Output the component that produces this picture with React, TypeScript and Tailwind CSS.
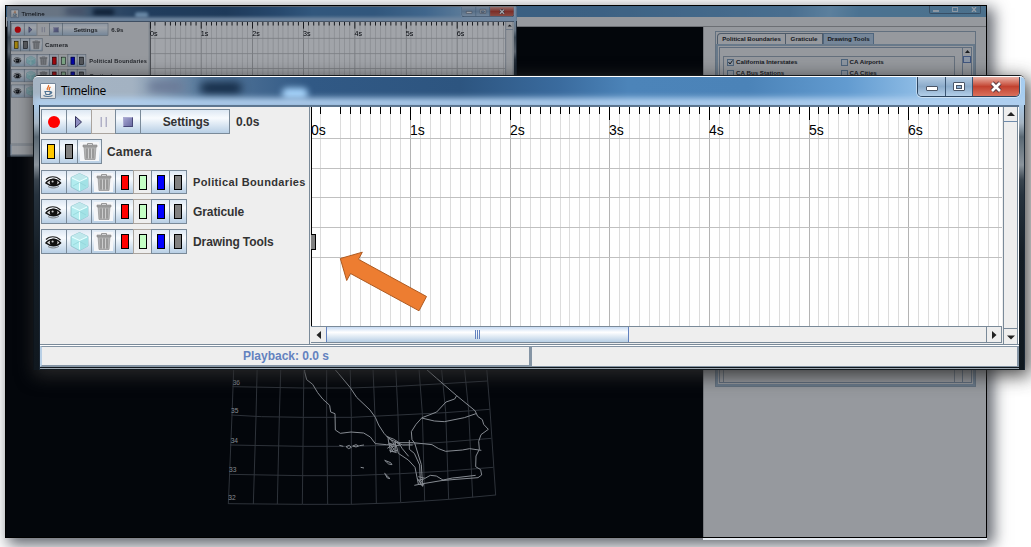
import React from "react";

const sans = "font-['Liberation_Sans',Arial,sans-serif]";

function JButton({ children, flat = false, className = "" }: { children?: React.ReactNode; flat?: boolean; className?: string }) {
  return (
    <div
      className={`-mr-px flex h-full shrink-0 items-center justify-center border ${
        flat ? "border-[#aaa49e] bg-[#eeeeee]" : "border-[#7a8a99] bg-linear-to-b from-[#dde8f3] via-[#f8fbfe] via-35% to-[#b8cfe5]"
      } ${className}`}
    >
      {children}
    </div>
  );
}

function Trash() {
  return (
    <div className="flex h-[19px] w-[19px] items-center justify-center bg-[#f5f6f8]">
      <svg width="18" height="19" viewBox="0 0 18 19">
        <path d="M6.5 3V1.5h5V3" fill="none" stroke="#999" />
        <path d="M3 4l1 13.5h10L15 4z" fill="#b2b2b2" stroke="#999" strokeWidth=".8" />
        <path d="M2 3h14v2H2z" fill="#a2a2a2" stroke="#888" strokeWidth=".6" />
        <path d="M6 6.5v10M9 6.5v10M12 6.5v10" stroke="#868686" strokeWidth="1.1" />
        <path d="M7.5 6.5v10M10.5 6.5v10" stroke="#d4d4d4" strokeWidth=".8" />
      </svg>
    </div>
  );
}

function Eye() {
  return (
    <svg width="17" height="14" viewBox="0 0 17 14" className="-ml-[2px]">
      <path d="M1 4.5C4 1 11 .5 15.5 5" fill="none" stroke="#222" strokeWidth="1.2" />
      <path d="M1 8C4 3.500 12 3 15.500 8 12 11.500 5 11.500 1 8z" fill="#ddd" stroke="#111" strokeWidth="1.500" />
      <circle cx="8.6" cy="7.3" r="3.8" fill="#111" />
      <circle cx="7.600" cy="6.500" r="1.1" fill="#ccc" />
      <path d="M3 11.5c3 2 8 2 11-.4" fill="none" stroke="#555" strokeWidth=".7" />
    </svg>
  );
}

function Cube() {
  return (
    <svg width="19" height="21" viewBox="0 0 19 21">
      <path d="M9.5 1.5L18 5.5V15l-8.500 4.500L1 15V5.500z" fill="#b2ecef" stroke="#8cbfc9" strokeWidth=".8" />
      <path d="M9.500 1.500L18 5.500 9.500 9 1 5.500z" fill="#bfe8ec" />
      <path d="M9.500 9L18 5.500V15l-8.500 4.500z" fill="#a3e2e6" />
      <path d="M2 6l7.500 3.400L17 6M9.500 9.400v9" fill="none" stroke="#e8ffff" strokeWidth="1.1" />
      <path d="M3 14l6.500-3.500L16 14" fill="none" stroke="#90d2d7" strokeWidth=".7" />
    </svg>
  );
}

function Chip({ color }: { color: string }) {
  return <div className={`h-[15px] w-[8px] border border-black ${color}`} />;
}

function LayerRow({ name, label, className }: { name?: string; label: string; className: string }) {
  return (
    <div className={`flex shrink-0 items-center ${className}`}>
      <JButton className="w-[26px]"><Eye /></JButton>
      <JButton className="w-[26px]"><Cube /></JButton>
      <JButton className="w-[25px]"><Trash /></JButton>
      <JButton className="w-[19px]"><Chip color="bg-[#ff0000]" /></JButton>
      <JButton flat className="w-[19px]"><Chip color="bg-[#c4ffc4]" /></JButton>
      <JButton className="w-[19px]"><Chip color="bg-[#0000ff]" /></JButton>
      <JButton className="w-[18px]"><Chip color="bg-[#808080]" /></JButton>
      {name && <span className={`pl-[7px] font-bold whitespace-nowrap text-[#333] ${label}`}>{name}</span>}
    </div>
  );
}

const TICKS = Array.from({ length: 70 }, (_, i) => i).filter((i) => i !== 2);
const tickX = (i: number) => Math.floor(i * 9.96);

function TimelineCanvas({ compact }: { compact: boolean }) {
  const weight = compact ? 1.6 : 1;
  return (
    <svg width="691" height="219" viewBox="0 0 691 219" className="block bg-white" shapeRendering={compact ? "auto" : "crispEdges"}>
      {TICKS.map((i) => (
        <rect key={i} x={tickX(i)} y="0" width={weight} height="219" fill={i % 10 ? "#dcdcdc" : "#b4b4b4"} />
      ))}
      {[31, 61, 90, 120, 150].map((y) => (
        <rect key={y} x="0" y={y} width="691" height={weight} fill="#c0c0c0" />
      ))}
      {TICKS.map((i) => (
        <rect key={i} x={tickX(i)} y="0" width={weight} height={i % 10 ? 7 : 13} fill="#000" />
      ))}
      <rect x="0" y="0" width="1" height="219" fill="#000" />
      <rect x="-4" y="127.500" width="8" height="15" fill="#808080" stroke="#000" />
      {[0, 1, 2, 3, 4, 5, 6].map((s) => (
        <text key={s} x={tickX(s * 10)} y="28" fontSize="14" fill="#000" fontFamily="Liberation Sans, Arial, sans-serif">
          {s}s
        </text>
      ))}
    </svg>
  );
}

function Arrow({ d }: { d: string }) {
  return (
    <svg width="10" height="10" viewBox="0 0 10 10">
      <path d={d} fill="#222" />
    </svg>
  );
}

function WindowButtons() {
  return (
    <div className="flex h-[20px] overflow-hidden rounded-b-[5px] border border-t-0 border-[#2c4560] shadow-[0_0_0_1px_rgba(255,255,255,.45)]">
      <div className="flex w-[28px] items-center justify-center border-r border-[#3b5673] bg-linear-to-b from-[#b4cbe2] via-[#8babca] via-50% to-[#b3cfe9]">
        <div className="mt-[4px] h-[5px] w-[12px] rounded-[1px] border border-[#4a5566] bg-white" />
      </div>
      <div className="flex w-[27px] items-center justify-center border-r border-[#3b5673] bg-linear-to-b from-[#b4cbe2] via-[#8babca] via-50% to-[#b3cfe9]">
        <div className="flex h-[9px] w-[12px] items-center justify-center rounded-[1px] border border-[#4a5566] bg-white">
          <div className="h-[4px] w-[6px] border border-[#4a5566] bg-[#90b0d0]" />
        </div>
      </div>
      <div className="flex w-[46px] items-center justify-center bg-linear-to-b from-[#e8b0a6] via-[#c2412f] via-50% to-[#d9705c]">
        <svg width="14" height="12" viewBox="0 0 14 12">
          <path d="M3 2l8 8M11 2l-8 8" stroke="#5d3b42" strokeWidth="4.600" />
          <path d="M3 2l8 8M11 2l-8 8" stroke="#fff" strokeWidth="2.600" />
        </svg>
      </div>
    </div>
  );
}

function TitleBar() {
  return (
    <div className="relative flex h-[29px] shrink-0 justify-between overflow-hidden rounded-t-[5px] border-t border-white bg-[linear-gradient(90deg,#a5b4c3_0%,#a3b2c2_10%,#56789b_17%,#315985_28%,#2d5580_43%,#3a6b9e_53%,#4c84b9_60%,#4b83b8_72%,#629bd0_82%,#92bfe7_90%,#a7cdf0_100%)]">
      <div className="absolute top-[4px] left-[115px] h-[11px] w-[36px] rounded-full bg-[#6a7895] blur-[5px]" />
      <div className="absolute top-[5px] left-[167px] h-[12px] w-[42px] rounded-full bg-[#142b46] blur-[4px]" />
      <div className="absolute top-[11px] left-[249px] h-[11px] w-[26px] rounded-md bg-[#a5d3fb] blur-[3px]" />
      <div className="absolute inset-x-0 bottom-[-3px] h-[10px] bg-[#b1d0ef] blur-[3px]" />
      <div className="relative flex items-center pl-[7px]">
        <div className="flex h-[16px] w-[16px] items-center justify-center rounded-[1px] border border-[#76879a] bg-linear-to-b from-white to-[#ddd]">
          <svg width="14" height="14" viewBox="0 0 14 14" fill="none">
            <path d="M7.500 1c1 2-2.500 3-1 5M9.500 3c-2 1-1.500 2-1 3.500" stroke="#e2702a" strokeWidth="1.300" />
            <path d="M4 7.500h5.500l-.8 3H5zM9.500 8c2-.5 1.500 1.500-.5 2M2.500 11.500c2 1.300 7 1.300 9 0" stroke="#4f7393" strokeWidth="1.100" />
          </svg>
        </div>
        <span className="pb-px pl-[5px] font-['Open_Sans','Noto_Sans',sans-serif] text-[12px] leading-none tracking-[-0.350px] text-black">Timeline</span>
      </div>
      <div className="relative pr-[5px]">
        <WindowButtons />
      </div>
    </div>
  );
}

function FrameEdge({ className }: { className: string }) {
  return (
    <div className={`shrink-0 border-[#0d1319] ${className}`}>
      <div className="h-full border-r border-[#1a2633] bg-[linear-gradient(180deg,#a9c8e6_0,#a5b4c2_18px,#5a6873_32px,#8b949c_60px,#39444e_75px,#26323d_90px,#141d25_150px,#10181f_100%)]" />
    </div>
  );
}

function TimelineWindow({ time, compact = false }: { time: string; compact?: boolean }) {
  return (
    <div className={`flex h-[294px] w-[992px] flex-col rounded-t-[6px] bg-[#10161c] ${sans}`}>
      <TitleBar />
      <div className="flex h-[265px]">
        <FrameEdge className="w-[7px] border-l" />
        <div className="flex w-[979px] flex-col">
          <div className="h-[2px] shrink-0 bg-[#5d7690]" />
          <div className="flex h-[238px] shrink-0 border-b border-[#7a8a99] bg-[#eeeeee]">
            <div className="flex w-[270px] shrink-0 flex-col border-r border-[#7a8a99] pt-[2px] pl-px">
              <div className="flex h-[25px] shrink-0 items-center">
                <JButton className="w-[26px]"><div className="h-[12px] w-[12px] rounded-full bg-[#ff0000]" /></JButton>
                <JButton className="w-[26px]">
                  <svg width="10" height="14" viewBox="0 0 10 14"><path d="M1.500 1.500l6 5.500-6 5.500z" fill="#8c8cc0" stroke="#34345c" /></svg>
                </JButton>
                <JButton flat className="w-[25px]">
                  <div className="flex gap-[3px]">
                    <div className="h-[10px] w-[2px] border-r border-[#b0b0c4] bg-[#d0d0de]" />
                    <div className="h-[10px] w-[2px] border-r border-[#b0b0c4] bg-[#d0d0de]" />
                  </div>
                </JButton>
                <JButton className="w-[26px]"><div className="h-[10px] w-[10px] border border-r-[#484878] border-b-[#484878] border-t-[#aaaad0] border-l-[#aaaad0] bg-linear-to-br from-[#a3a3cf] to-[#6b6ba2]" /></JButton>
                <JButton className="w-[90px]"><span className="pl-[2px] text-[12px] font-bold tracking-[-0.100px] text-[#333]">Settings</span></JButton>
                <span className="pl-[7px] text-[12px] font-bold text-[#333]">{time}</span>
              </div>
              <div className="mt-[5px] flex h-[25px] shrink-0 items-center">
                <JButton className="w-[19px]"><Chip color="bg-[#ffc800]" /></JButton>
                <JButton className="w-[19px]"><Chip color="bg-[#808080]" /></JButton>
                <JButton className="w-[25px]"><Trash /></JButton>
                <span className="pl-[6px] text-[12px] font-bold tracking-[0.150px] text-[#333]">Camera</span>
              </div>
              <LayerRow name="Political Boundaries" className="mt-[6px] h-[24px]" label="text-[11px] tracking-[0.350px]" />
              <LayerRow name="Graticule" className="mt-[5px] h-[25px]" label="text-[12px] tracking-[-0.100px]" />
              <LayerRow name={compact ? undefined : "Drawing Tools"} className="mt-[5px] h-[25px]" label="text-[12px] tracking-[-0.100px]" />
            </div>
            <div className="ml-px flex w-[691px] shrink-0 flex-col">
              <TimelineCanvas compact={compact} />
              <div className="flex h-[17px] border-y border-[#7a8a99] bg-[#eeeeee]">
                <div className="flex w-[15px] items-center justify-center"><Arrow d="M7 1v8L2.500 5z" /></div>
                <div className="flex w-[303px] items-center justify-center gap-[1px] border border-y-0 border-[#6382bf] bg-linear-to-b from-[#c8dbf3] via-[#ffffff] via-35% to-[#b8cfe5]">
                  <div className="h-[9px] w-px bg-[#6382bf]" />
                  <div className="h-[9px] w-px bg-[#6382bf]" />
                  <div className="h-[9px] w-px bg-[#6382bf]" />
                </div>
                <div className="flex-1" />
                <div className="flex w-[16px] items-center justify-center border-x border-[#7a8a99]"><Arrow d="M3 1v8l4.500-4z" /></div>
              </div>
            </div>
            <div className="ml-px flex w-[15px] shrink-0 flex-col justify-between border-x border-[#7a8a99] bg-[#eeeeee]">
              <div className="flex h-[15px] items-center justify-center border-b border-[#6f8bab]"><Arrow d="M1 7h8L5 3z" /></div>
              <div className="flex h-[16px] items-center justify-center border-t border-[#7a8a99]"><Arrow d="M1 3.500h8L5 7.500z" /></div>
            </div>
            <div className="flex-1 bg-white" />
          </div>
          <div className="flex h-[22px] shrink-0 border-t border-white bg-[#eeeeee] text-[12px] font-bold text-[#6382bf]">
            <div className="flex w-[491px] items-center justify-center border-2 border-t border-[#8494a4] border-l-[#b8cfe5]">
              {!compact && <span className="pl-[1px]">Playback: 0.0 s</span>}
            </div>
            <div className="flex-1 border border-r-2 border-[#8494a4]" />
          </div>
          <div className="mt-px h-px bg-[#9aa5ae]" />
        </div>
        <FrameEdge className="w-[6px]" />
      </div>
    </div>
  );
}

function GraticuleMap() {
  return (
    <svg width="300" height="160" viewBox="0 0 900 480" fill="none" strokeWidth="3">
      <g stroke="#4a4e52" strokeWidth="2.800">
        <path d="M72 0L66 165 55 432M142 0L138 170 130 432M213 0L208 170 202 432M282 0L280 170 277 432M350 0v170l3 262M420 0l4 170v262M488 0l7 170 4 260M556 0l8 165 8 262M625 0l12 160 7 263M692 0l15 155 9 262M761 0l15 152 12 260M828 0l12 150 17 256" />
        <path d="M68 80l212 4h140l140-5 140-8 132-8M64 165l90 5 126 2h145l140-7 140-7 134-10M60 255l220 4h145l145-4 140-9 134-11M57 343l220 4h145l150-6 140-8 138-11M55 431l222 2h145l150-5 145-10 140-13" />
      </g>
      <g stroke="#d4d7da" strokeWidth="3">
        <path d="M285 0l-1 35 6 24 18 14 15 25 16 20 20 18 3 20 13 5 1 49 15 10 32-4 38 3 20 12 15 20 34 3 22 1M350 0l35 40 35 42 20 30 40 38 16 22 10 23 16 25 16 17 40 18h30M640 20l40 35 60 52 55 45 8 17 14 10 4 14 14 15-22 16-7 20 2 24-10 20-1 32 15 9 3 16-11 8-66 5-45 4-60 10-20 4" />
        <path d="M740 107l-6 10-26 9-28 30-20 8-24 9-18 20-14 22 2 24 8 10 20 65 4 66M635 174l38 9 30 2 60-12 35-12M560 248h50l56 6 20 12 21 8 50-4 22-4 35 5M532 228l28 32 5 20 30 20 20 22 10 50 15 4M530 230l20 7 16 10 10 18 20 24M598 240v28l15 12 16 35 2 50M625 350l20 5 16-9 18 2 20 12 28-6 20-2 50-6" />
        <path d="M388 256l12 3M408 260l10-4 6 6-8 4zM428 258l10-4 8 4-8 3zM448 257l14-2M452 322l10 2M524 301l18 7 4 6-10-2zM524 340l16 16-8-2z" />
        <path d="M534 235l8 42 18-20-24-8 22 26-2-30 14 10-28 6 6 14 14-4M532 265l26-20M538 272l22 6" />
        <path d="M622 355l10 14 8-12-14 4 10 16 6-4" />
      </g>
      {([["36", 68, 74], ["35", 63, 160], ["34", 62, 249], ["33", 57, 337], ["32", 55, 421]] as [string, number, number][]).map(([t, x, y]) => (
        <text key={t} x={x} y={y} fontSize="20" fill="#d0d3d5" fontFamily="Liberation Sans, Arial, sans-serif">{t}</text>
      ))}
    </svg>
  );
}

function CheckItem({ label, checked = false }: { label: string; checked?: boolean }) {
  return (
    <div className="flex w-[114px] items-center gap-[2px]">
      <div className="flex h-[7px] w-[7px] items-center justify-center border border-[#7a9ab8] bg-[#dfe9f3]">
        {checked && <svg width="5" height="5" viewBox="0 0 5 5"><path d="M.5 2l1.500 2L4.500.5" fill="none" stroke="#222" /></svg>}
      </div>
      <span>{label}</span>
    </div>
  );
}

function ToolsPanel() {
  return (
    <div className={`flex h-[510px] w-[283px] flex-col border-l border-[#bbb] bg-[#eeeeee] pt-[4px] pl-[11px] text-[6.200px] leading-none font-bold text-[#222] ${sans}`}>
      <div className="flex h-[356px] w-[261px] flex-col border border-[#9aabbc]">
        <div className="flex h-[12px] items-end pl-[1px]">
          <div className="flex h-[11px] w-[69px] items-center justify-center rounded-tl border border-b-0 border-[#7a8a99] text-[6.100px]">Political Boundaries</div>
          <div className="flex h-[11px] w-[37px] items-center justify-center border-t border-r border-[#7a8a99]">Graticule</div>
          <div className="flex h-[11px] w-[51px] items-center justify-center border border-b-0 border-[#7a9ab8] bg-[#b8cfe5]">Drawing Tools</div>
        </div>
        <div className="flex-1 border-2 border-[#a4bace] p-px">
          <div className="flex h-full justify-between border border-[#93a5b8]">
            <div className="mt-[8px] ml-[3px] flex w-[232px] flex-col gap-[4px] border border-b-0 border-[#9eabb9] pt-[2px] pl-[3px]">
              <div className="flex"><CheckItem label="California Interstates" checked /><CheckItem label="CA Airports" /></div>
              <div className="flex"><CheckItem label="CA Bus Stations" /><CheckItem label="CA Cities" /></div>
            </div>
            <div className="flex w-[9px] flex-col items-center border-l border-[#93a5b8]">
              <div className="flex h-[8px] items-center"><svg width="5" height="4" viewBox="0 0 5 4"><path d="M0 3h5L2.500 0z" fill="#222" /></svg></div>
              <div className="h-[7px] w-full border border-[#6382bf] bg-[#dbe8fa]" />
            </div>
          </div>
        </div>
      </div>
    </div>
  );
}

function MainWindow() {
  return (
    <div className="relative flex h-[533px] w-[982px] flex-col overflow-hidden border border-black bg-black">
      <div className="flex h-[11px] shrink-0 justify-end bg-[linear-gradient(100deg,#4f86b5_0%,#5c93c2_60%,#72a9d6_80%,#8fc4ec_84%,#74afd9_87%,#76acd0_100%)] pr-[5px]">
        <div className="flex h-[8px] w-[52px] items-center justify-between rounded-b-[2px] border border-t-0 border-[#547591] px-[3px]">
          <div className="mt-[2px] h-[2px] w-[6px] bg-[#dceaf5]" />
          <div className="h-[5px] w-[6px] border border-[#dceaf5]" />
          <svg width="6" height="5" viewBox="0 0 6 5"><path d="M1 0l4 5M5 0L1 5" stroke="#e8f2fa" strokeWidth="1.300" /></svg>
        </div>
      </div>
      <div className="h-[10px] shrink-0 border-b border-[#aaa] bg-[#eeeeee]" />
      <div className="flex flex-1 justify-between">
        <div className="pt-[333px] pl-[204px]"><GraticuleMap /></div>
        <ToolsPanel />
      </div>
      <div className="absolute top-0 left-[1px] h-[151px] w-[510px]">
        <div className="origin-top-left scale-[0.514]"><TimelineWindow time="6.9s" compact /></div>
      </div>
      <div className="absolute inset-0 bg-[#08101d]/38" />
    </div>
  );
}

export default function App() {
  return (
    <div className="relative h-[547px] w-[1031px] overflow-hidden bg-white">
      <div className="absolute top-[5px] left-[5px] shadow-[5px_5px_14px_2px_rgba(50,55,65,.75)]">
        <MainWindow />
      </div>
      <div className="absolute top-[538px] left-[703px] h-[2px] w-[284px] bg-[#e6ebf2]" />
      <div className="absolute top-[76px] left-[33px] rounded-t-[6px] shadow-[3px_4px_18px_2px_rgba(45,45,45,.85),0_-1px_0_0_#0d1319]">
        <TimelineWindow time="0.0s" />
      </div>
      <svg className="absolute top-[248px] left-[336px]" width="96" height="68" viewBox="336 248 96 68">
        <path d="M340.300 258.500L362.300 252.200 358.500 259.300 426.500 296.500 419 310.800 350.500 273.500 346.700 280.500z" fill="#ed7d31" stroke="#ae5a21" />
      </svg>
    </div>
  );
}
